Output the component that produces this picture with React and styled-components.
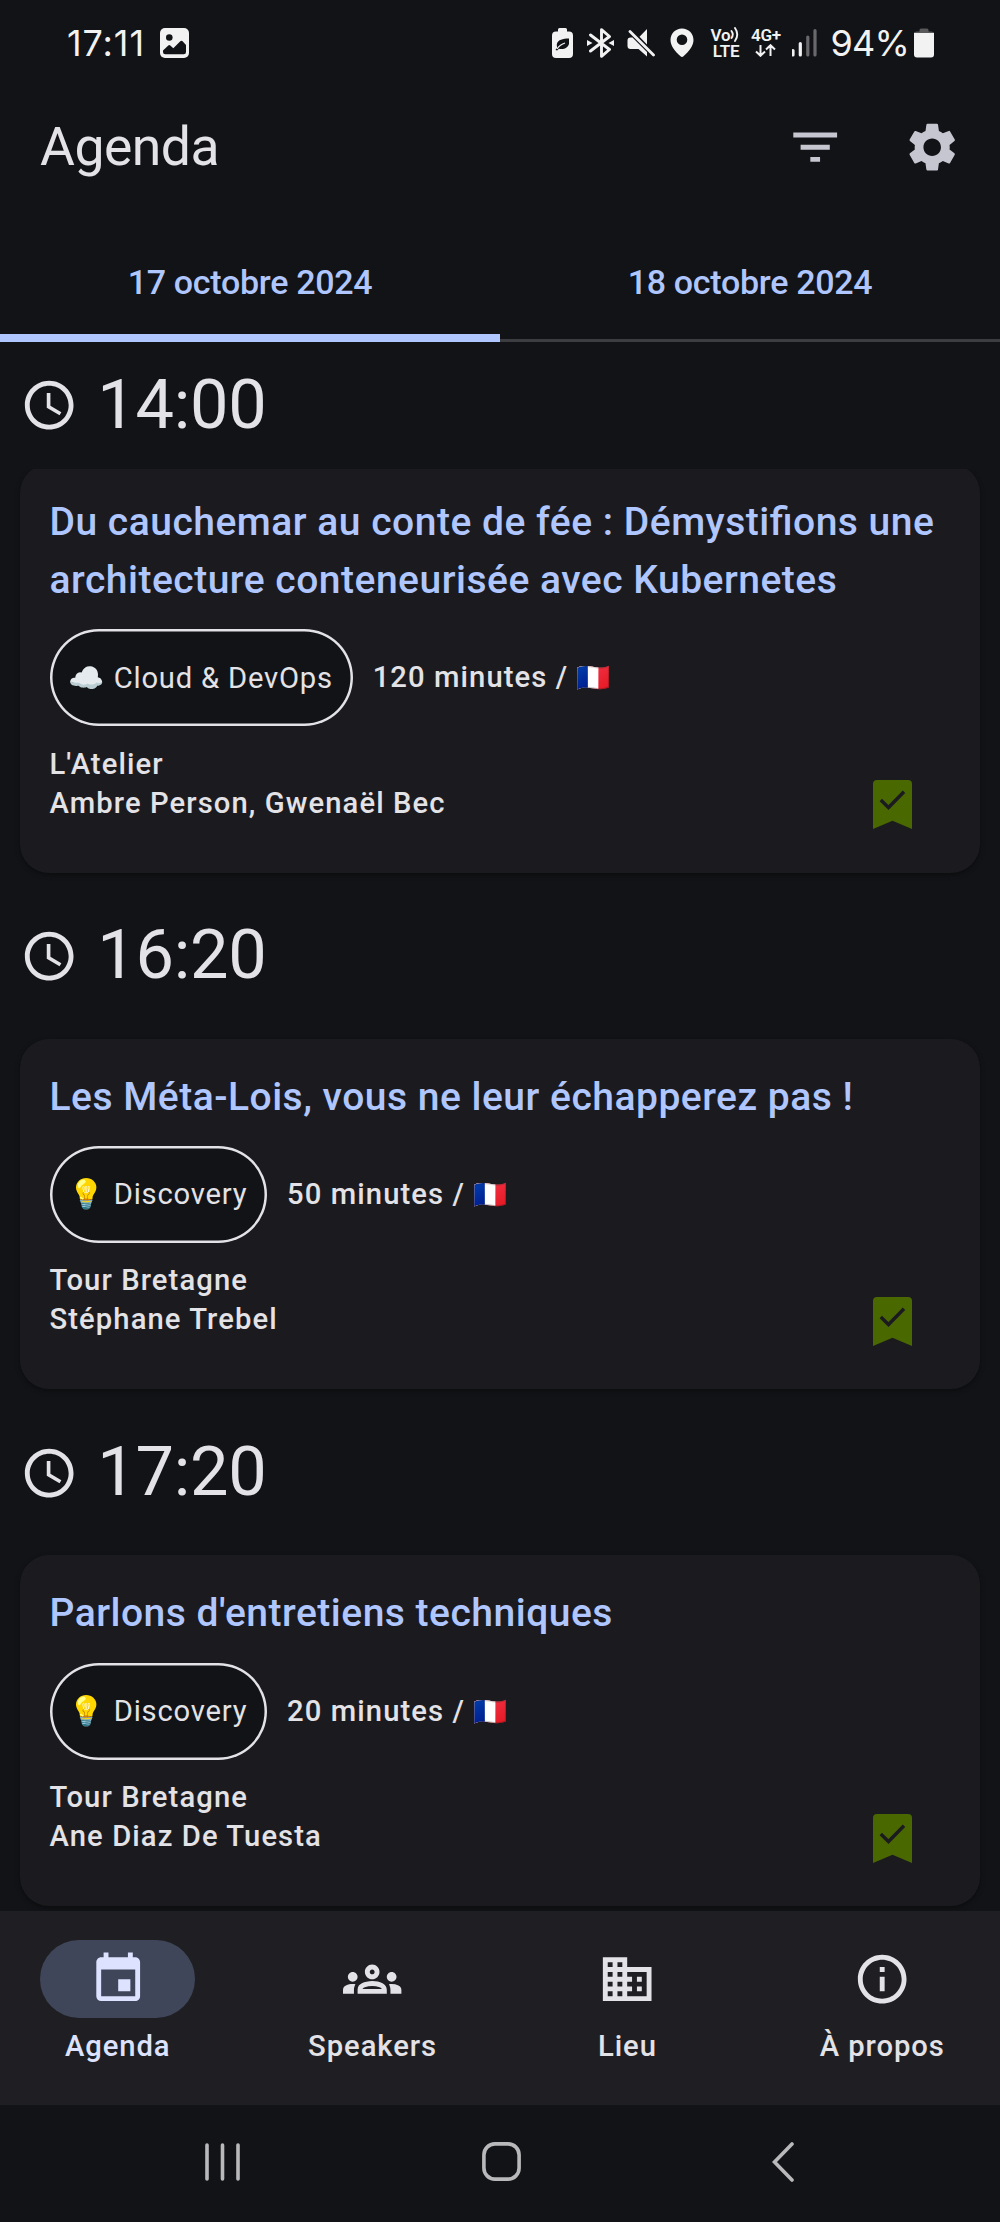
import { useState } from 'react';
import styled, { createGlobalStyle } from 'styled-components';
import {
  MdFilterList,
  MdSettings,
  MdSchedule,
  MdEvent,
  MdOutlineGroups,
  MdBusiness,
  MdOutlineInfo,
} from 'react-icons/md';

const GlobalStyle = createGlobalStyle`
  * {
    box-sizing: border-box;
  }
  body {
    margin: 0;
    background: #111316;
    font-family: Roboto, 'Noto Color Emoji', sans-serif;
    color: #e3e2e6;
  }
`;
const Screen = styled.div`
  display: flex;
  flex-direction: column;
  width: 1000px;
  height: 2222px;
  background: #111316;
  overflow: hidden;
`;

/* status bar */
const StatusBar = styled.div`
  display: flex;
  justify-content: space-between;
  flex: none;
  height: 69px;
  padding: 16px 66px 0 67px;
  color: #f2f2f3;
`;
const StatusGroup = styled.div`
  display: flex;
  align-items: center;
  height: 53px;
  svg {
    display: block;
    flex: none;
  }
`;
const StatusText = styled.span`
  font-family: Inter, sans-serif;
  font-size: 36px;
  line-height: 52px;
  font-weight: 400;
  letter-spacing: ${({ $spacing }) => $spacing};
  margin-right: ${({ $gap }) => $gap};
`;
const StatusIcons = styled.div`
  display: flex;
  align-items: center;
  gap: 13px;
  margin-right: 12px;
`;
const Network = styled.div`
  display: flex;
  flex-direction: column;
  align-items: ${({ $align }) => $align || 'center'};
  width: ${({ $width }) => $width};
  height: 32px;
  font-size: 17px;
  line-height: 16px;
  font-weight: 600;
  letter-spacing: -0.2px;
`;
const NetworkRow = styled.div`
  display: flex;
  align-items: center;
  justify-content: center;
  height: 16px;
  white-space: nowrap;
`;

/* top bar */
const TopBar = styled.div`
  display: flex;
  align-items: center;
  flex: none;
  height: 156px;
  padding: 0 9.5px 0 40px;
`;
const PageTitle = styled.h1`
  flex: 1;
  margin: 0;
  font-size: 53.5px;
  line-height: 68px;
  font-weight: 400;
  letter-spacing: -0.5px;
`;
const IconButton = styled.button`
  display: flex;
  align-items: center;
  justify-content: center;
  width: 116.7px;
  height: 116.7px;
  padding: 0;
  border: none;
  background: none;
  color: #c5c6d0;
`;

/* tabs */
const Tabs = styled.div`
  display: flex;
  flex: none;
  height: 117px;
`;
const Tab = styled.button`
  display: flex;
  align-items: center;
  justify-content: center;
  flex: 1;
  padding: 0 0 3px;
  border: none;
  background: none;
  box-shadow: ${({ $active }) =>
    $active ? 'inset 0 -8px 0 #b0c6ff' : 'inset 0 -3px 0 #3c3d41'};
  font-family: inherit;
  font-size: 34px;
  font-weight: 500;
  letter-spacing: -0.3px;
  color: #b0c6ff;
`;

/* sessions */
const List = styled.div`
  flex: 1;
  min-height: 0;
  overflow: hidden;
`;
const SlotHeader = styled.div`
  position: relative;
  z-index: 1;
  display: flex;
  align-items: center;
  gap: 19px;
  height: 127px;
  padding: 0 19.9px;
  background: #111316;
  color: #e3e2e6;
`;
const SlotTime = styled.span`
  font-size: 68.5px;
  line-height: 88px;
  letter-spacing: -0.3px;
  margin-bottom: 2px;
`;
const Card = styled.div`
  display: flex;
  flex-direction: column;
  align-items: flex-start;
  position: relative;
  margin: ${({ $tucked }) => ($tucked ? '-5.5px' : '19px')} 20px 20px;
  padding: 29px 29px 50px 29.5px;
  border-radius: 29px;
  background: #1b1b1f;
  box-shadow: 0 2px 5px rgba(0, 0, 0, 0.35);
`;
const CardTitle = styled.div`
  font-size: 39px;
  line-height: 58.3px;
  font-weight: 500;
  letter-spacing: 0.5px;
  font-feature-settings: 'liga' 1;
  color: #b0c6ff;
`;
const Meta = styled.div`
  display: flex;
  align-items: center;
  gap: 20px;
  margin: 20px 0 18.5px;
`;
const Chip = styled.span`
  display: flex;
  align-items: center;
  height: 97px;
  padding: 0 19.7px 0 19px;
  border-radius: 49px;
  background: #111316;
  box-shadow: inset 0 0 0 2.5px #e3e2e6;
  font-size: 29.2px;
  letter-spacing: 0.8px;
  white-space: pre;
`;
const Label = styled.div`
  font-size: 29.2px;
  line-height: 39px;
  font-weight: 500;
  letter-spacing: 1.1px;
  white-space: pre;
`;
const Flag = styled.span`
  font-size: 27.5px;
`;
const Bookmark = styled.svg`
  position: absolute;
  right: 68px;
  bottom: 43.5px;
  width: 39px;
  height: 49px;
`;

/* bottom navigation */
const BottomNav = styled.nav`
  display: flex;
  gap: 19.4px;
  flex: none;
  height: 194px;
  background: #1f1f23;
`;
const NavItem = styled.button`
  display: flex;
  flex-direction: column;
  align-items: center;
  flex: 1;
  padding: 29px 0 0;
  border: none;
  background: none;
  font-family: inherit;
  color: ${({ $active }) => ($active ? '#dce2ff' : '#e3e2e6')};
`;
const Pill = styled.span`
  display: flex;
  align-items: center;
  justify-content: center;
  width: 155.5px;
  height: 77.5px;
  margin-bottom: 9.5px;
  border-radius: 39px;
  background: ${({ $active }) => ($active ? '#404659' : 'transparent')};
`;
const NavLabel = styled(Label)`
  letter-spacing: 0.95px;
`;
const SystemNav = styled.div`
  display: grid;
  grid-template-columns: 37px 39px 22px;
  column-gap: 241px;
  align-items: center;
  flex: none;
  height: 117px;
  padding: 0 0 4px 204px;
  svg:last-child {
    margin-left: 10px;
  }
`;

const sessions = [
  {
    time: '14:00',
    title:
      'Du cauchemar au conte de fée : Démystifions une architecture conteneurisée avec Kubernetes',
    category: '☁️ Cloud & DevOps',
    duration: '120 minutes / ',
    flag: '🇫🇷',
    room: "L'Atelier",
    speakers: 'Ambre Person, Gwenaël Bec',
  },
  {
    time: '16:20',
    title: 'Les Méta-Lois, vous ne leur échapperez pas !',
    category: '💡 Discovery',
    duration: '50 minutes / ',
    flag: '🇫🇷',
    room: 'Tour Bretagne',
    speakers: 'Stéphane Trebel',
  },
  {
    time: '17:20',
    title: "Parlons d'entretiens techniques",
    category: '💡 Discovery',
    duration: '20 minutes / ',
    flag: '🇫🇷',
    room: 'Tour Bretagne',
    speakers: 'Ane Diaz De Tuesta',
  },
];
const days = ['17 octobre 2024', '18 octobre 2024'];
const destinations = [
  { label: 'Agenda', Icon: MdEvent },
  { label: 'Speakers', Icon: MdOutlineGroups },
  { label: 'Lieu', Icon: MdBusiness },
  { label: 'À propos', Icon: MdOutlineInfo },
];

const Status = () => (
  <StatusBar>
    <StatusGroup>
      <StatusText $spacing="0.9px" $gap="15px">
        17:11
      </StatusText>
      <svg width="29" height="30" viewBox="0 0 29 30">
        <rect width="29" height="30" rx="5" fill="#f2f2f3" />
        <circle cx="9.3" cy="9.5" r="3.3" fill="#111316" />
        <path
          d="M3 22.5l5.3-5q1-.8 2 0l3 2.8 7-7q1.2-1 2.3 0L26 17v7q0 2.3-2.3 2.3H5.3Q3 26.3 3 24z"
          fill="#111316"
        />
      </svg>
    </StatusGroup>
    <StatusGroup>
      <StatusIcons>
        <svg width="21" height="30" viewBox="0 0 21 30">
          <path
            d="M6 3.500V1.500Q6 0 7.500 0h6Q15 0 15 1.500v2h2Q21 3.500 21 7.500V26q0 4-4 4H4q-4 0-4-4V7.500q0-4 4-4z"
            fill="#f2f2f3"
          />
          <path
            d="M17 10.500c-6.500 0-10.800 1.400-12 5-.4 1.500-.2 2.800.3 4L3.500 22l1.700.5 1.700-1.700c5 1.300 9.500-1.500 10.100-5z"
            fill="#111316"
          />
          <path d="M5 21q3-4.500 8-6" fill="none" stroke="#f2f2f3" strokeWidth="1.200" />
        </svg>
        <svg width="28" height="30" viewBox="-1 0 28 30">
          <path
            d="M3.500 7L22.500 21.500l-8 6.800V1.700l8 6.800L3.500 23"
            fill="none"
            stroke="#f2f2f3"
            strokeWidth="2.900"
            strokeLinejoin="round"
            strokeLinecap="round"
          />
          <path d="M0 12l5.500 3L0 18zM27 12l-5.500 3 5.500 3z" fill="#f2f2f3" />
        </svg>
        <svg width="28" height="30" viewBox="0 0 28 30">
          <path
            d="M20 1v15.500L12.500 8.800zM5.500 9.500L20 24v4.500l-8.500-7.500H3.500Q.5 21 .5 18v-5.500Q.5 9.500 3.500 9.500z"
            fill="#f2f2f3"
          />
          <path d="M3 3.500l23.500 23.500" stroke="#f2f2f3" strokeWidth="2.800" strokeLinecap="round" />
        </svg>
        <svg width="26" height="30" viewBox="-2 0 26 30">
          <path
            fillRule="evenodd"
            d="M12 .5C5.500.5.500 5.500.500 12c0 6.500 5 11.500 10 16.300q1.500 1.400 3 0c5-4.800 10-9.800 10-16.300C23.500 5.500 18.500.500 12 .500zM12 6.500a5.300 5.300 0 110 10.600 5.300 5.300 0 010-10.600z"
            fill="#f2f2f3"
          />
        </svg>
        <Network $width="32px" $align="flex-end">
          <NetworkRow>
            Vo
            <svg width="9" height="15" viewBox="0 0 9 15">
              <path
                d="M1.500 4q2.500 3.500 0 7M5 1q4.500 6.500 0 13"
                fill="none"
                stroke="#f2f2f3"
                strokeWidth="1.900"
                strokeLinecap="round"
              />
            </svg>
          </NetworkRow>
          <NetworkRow>LTE</NetworkRow>
        </Network>
        <Network $width="27px">
          <NetworkRow>4G+</NetworkRow>
          <NetworkRow>
            <svg width="21" height="13" viewBox="0 0 21 13">
              <path
                d="M5.500 1v10M1 7.500l4.500 4.300 4.500-4.300M15.500 12V2M11 5.500l4.500-4.300L20 5.500"
                fill="none"
                stroke="#f2f2f3"
                strokeWidth="2"
              />
            </svg>
          </NetworkRow>
        </Network>
        <svg width="26" height="30" viewBox="1 0 26 30">
          <path d="M2 22.500v4.500M9.300 15.500V27" stroke="#f2f2f3" strokeWidth="3.200" strokeLinecap="round" />
          <path d="M16.800 9v18M24 2.500V27" stroke="#69696c" strokeWidth="3.200" strokeLinecap="round" />
        </svg>
      </StatusIcons>
      <StatusText $spacing="-0.8px" $gap="5px">
        94%
      </StatusText>
      <svg width="20" height="30" viewBox="0 0 20 30">
        <path d="M0 5Q0 3.500 3 3.500h2.500V2Q5.500.500 7 .500h6q1.500 0 1.500 1.500v1.500H17q3 0 3 1.500z" fill="#59595c" />
        <path d="M0 5h20v21.500q0 3-3 3H3q-3 0-3-3z" fill="#f2f2f3" />
      </svg>
    </StatusGroup>
  </StatusBar>
);

const Session = ({ session, tucked }) => (
  <>
    <SlotHeader>
      <MdSchedule size={58.4} />
      <SlotTime>{session.time}</SlotTime>
    </SlotHeader>
    <Card $tucked={tucked}>
      <CardTitle>{session.title}</CardTitle>
      <Meta>
        <Chip>{session.category}</Chip>
        <Label>
          {session.duration}
          <Flag>{session.flag}</Flag>
        </Label>
      </Meta>
      <Label>{session.room}</Label>
      <Label>{session.speakers}</Label>
      <Bookmark viewBox="0 0 39 49">
        <path d="M0 49V4q0-4 4-4h31q4 0 4 4v45l-19.500-8.300z" fill="#4a6800" />
        <path d="M7.800 20l7.700 7.500L31 11.800" fill="none" stroke="#1b1b1f" strokeWidth="3.400" />
      </Bookmark>
    </Card>
  </>
);

const App = () => {
  const [day, setDay] = useState(0);
  const [page, setPage] = useState('Agenda');

  return (
    <Screen>
      <GlobalStyle />
      <Status />
      <TopBar>
        <PageTitle>Agenda</PageTitle>
        <IconButton>
          <MdFilterList size={58.4} />
        </IconButton>
        <IconButton>
          <MdSettings size={58.4} />
        </IconButton>
      </TopBar>
      <Tabs>
        {days.map((label, i) => (
          <Tab key={label} $active={day === i} onClick={() => setDay(i)}>
            {label}
          </Tab>
        ))}
      </Tabs>
      <List>
        {sessions.map((session, i) => (
          <Session key={session.time} session={session} tucked={i === 0} />
        ))}
      </List>
      <BottomNav>
        {destinations.map(({ label, Icon }) => (
          <NavItem
            key={label}
            $active={page === label}
            onClick={() => setPage(label)}
          >
            <Pill $active={page === label}>
              <Icon size={58.4} />
            </Pill>
            <NavLabel>{label}</NavLabel>
          </NavItem>
        ))}
      </BottomNav>
      <SystemNav>
        <svg width="37" height="38" viewBox="0 0 37 38">
          <path
            d="M3 2v34M18.500 2v34M34 2v34"
            stroke="#b9b9bb"
            strokeWidth="3.600"
            strokeLinecap="round"
          />
        </svg>
        <svg width="39" height="39" viewBox="0 0 39 39">
          <rect
            x="1.900"
            y="1.900"
            width="35.200"
            height="35.200"
            rx="11"
            fill="none"
            stroke="#b9b9bb"
            strokeWidth="3.600"
          />
        </svg>
        <svg width="22" height="40" viewBox="0 0 22 40">
          <path
            d="M20 2L2.500 20 20 38"
            fill="none"
            stroke="#b9b9bb"
            strokeWidth="3.600"
            strokeLinecap="round"
          />
        </svg>
      </SystemNav>
    </Screen>
  );
};

export default App;
